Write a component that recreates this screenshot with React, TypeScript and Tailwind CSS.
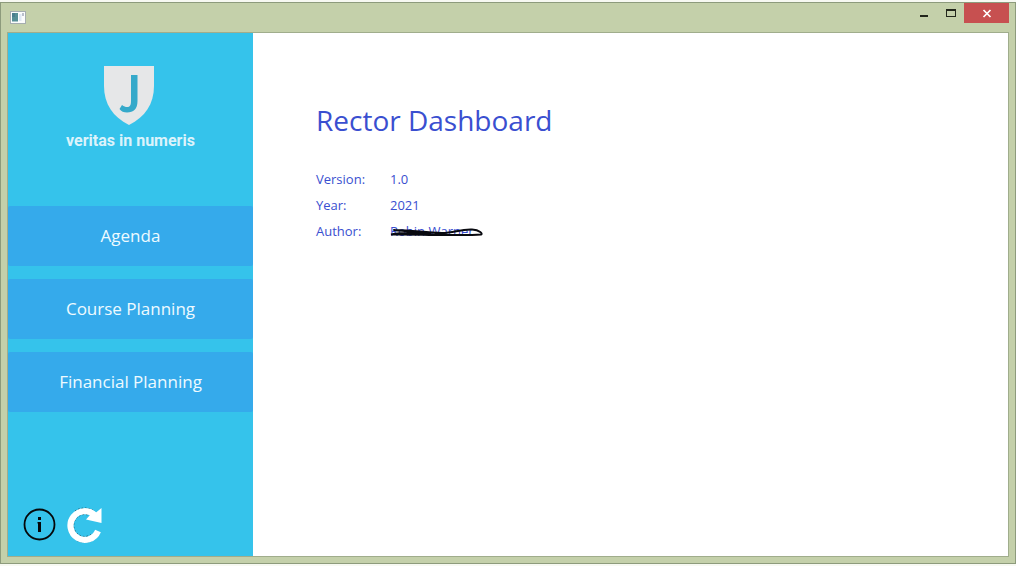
import React from "react";

const navItems = ["Agenda", "Course Planning", "Financial Planning"];

function TitleBar() {
  return (
    <header className="flex h-[29px] shrink-0 items-start justify-between">
      <svg className="mt-2 ml-[9px] h-[13px] w-4" viewBox="0 0 16 13" aria-hidden="true">
        <rect x="0.5" y="0.5" width="15" height="12" fill="#fbfcfc" stroke="#a5adb0" />
        <rect x="2" y="2" width="6" height="8.5" fill="#568f96" />
        <rect x="2" y="2" width="3" height="4" fill="#4b7e8f" />
        <rect x="9" y="3" width="2.5" height="7" fill="#dfe8f4" />
        <rect x="12" y="2" width="2" height="3" fill="#b9bfcb" />
      </svg>
      <div className="flex h-5">
        <button type="button" aria-label="Minimize" className="w-[27px]">
          <svg className="h-5 w-[27px]" viewBox="0 0 27 20">
            <rect x="9" y="12" width="8" height="2" fill="#22261b" />
          </svg>
        </button>
        <button type="button" aria-label="Maximize" className="w-[26px]">
          <svg className="h-5 w-[26px]" viewBox="0 0 26 20">
            <path d="M8 6h10v8H8zM9 8v5h8V8z" fill="#22261b" fillRule="evenodd" />
          </svg>
        </button>
        <button type="button" aria-label="Close" className="mr-[6px] w-[45px] bg-[#c75050]">
          <svg className="h-5 w-[45px]" viewBox="0 0 45 20">
            <path d="M19.5 7l7 7M26.5 7l-7 7" stroke="#fff" strokeWidth="1.7" />
          </svg>
        </button>
      </div>
    </header>
  );
}

function Logo() {
  return (
    <div className="flex h-[173px] flex-col items-center pt-[33px]">
      <svg className="h-[60px] w-[53px]" viewBox="0 0 53 60" aria-hidden="true">
        <path d="M0 0H50V20C50 38 41 51 25 59C9 51 0 38 0 20Z" fill="#e6e7e8" />
        <path
          d="M27 9H33.5V35C33.5 43 29.5 46.5 23 46.5C20 46.5 17 45.5 15.5 43L18 39C20 40.5 21.5 41 23 41C26 41 27 39 27 35Z"
          fill="#35a9ca"
        />
      </svg>
      <p className="font-['Roboto',sans-serif] text-base leading-[30px] font-bold text-[#dcf3fb]">veritas in numeris</p>
    </div>
  );
}

function Sidebar() {
  return (
    <aside className="flex w-[245px] shrink-0 flex-col bg-[#35c3eb]">
      <Logo />
      <nav className="flex flex-col gap-[13px]">
        {navItems.map((item) => (
          <button
            key={item}
            type="button"
            className="h-[60px] rounded-xs bg-[#35aaeb] pb-px text-[17px] text-[#eefaff]"
          >
            {item}
          </button>
        ))}
      </nav>
      <div className="mt-auto flex items-center gap-[10px] pb-[13px] pl-[15px]">
        <button type="button" aria-label="Information">
          <svg className="h-[34px] w-[34px]" viewBox="0 0 34 34">
            <circle cx="16.5" cy="16.5" r="15" fill="none" stroke="#05080a" strokeWidth="1.8" />
            <rect x="15" y="9" width="3" height="3" fill="#05080a" />
            <path d="M14.5 14H18v10h-3v-8.5h-.5z" fill="#05080a" />
          </svg>
        </button>
        <button type="button" aria-label="Refresh">
          <svg className="h-9 w-9" viewBox="0 0 36 36">
            <path
              d="M24 27.5A11 11 0 1 1 21 8M8 4A17.3 17.3 0 0 1 28 4.5M10 33.5A17.3 17.3 0 0 0 25 33.5"
              fill="none"
              stroke="#17475a"
              strokeDasharray="1.5 2"
            />
            <path d="M31 24A14.3 14.3 0 1 1 28 8.5" fill="none" stroke="#fff" strokeWidth="6.2" />
            <path d="M34.5 1V16L19 12.5L23 8L29 5.5Z" fill="#fff" />
          </svg>
        </button>
      </div>
    </aside>
  );
}

function Details() {
  return (
    <main className="flex-1 bg-white pt-[66px] pl-[63px] text-[#3a4fd0]">
      <h1 className="text-[28px] leading-[42px] font-normal">Rector Dashboard</h1>
      <dl className="mt-[25px] grid grid-cols-[74px_auto] justify-start text-[13px] leading-[26px]">
        <dt>Version:</dt>
        <dd>1.0</dd>
        <dt>Year:</dt>
        <dd>2021</dd>
        <dt>Author:</dt>
        <dd className="relative">
          Robin Warner
          <svg className="absolute top-2 left-0 h-3 w-[94px]" viewBox="0 0 94 12" aria-hidden="true">
            <path
              d="M4 4C25 4 34 7 52 7C64 7 70 3 82 3.5C90 4 93 8 91 8.5C80 9.5 60 9 52 9C36 9 20 8 1 8.5C15 6 28 7 40 8M4 4C18 6 40 5 56 8.5"
              fill="none"
              stroke="#090a10"
              strokeWidth="2"
              strokeLinecap="round"
            />
          </svg>
        </dd>
      </dl>
    </main>
  );
}

export default function App() {
  return (
    <div className="flex min-h-screen flex-col bg-[#f7f9f2] pt-[2px] pb-[2px] font-['Open_Sans',sans-serif]">
      <div className="flex flex-1 flex-col border border-[#8d9b7c] bg-[#c4d0aa]">
        <TitleBar />
        <div className="mx-[6px] mb-[6px] flex flex-1 border border-[#a0ad8c]">
          <Sidebar />
          <Details />
        </div>
      </div>
    </div>
  );
}
